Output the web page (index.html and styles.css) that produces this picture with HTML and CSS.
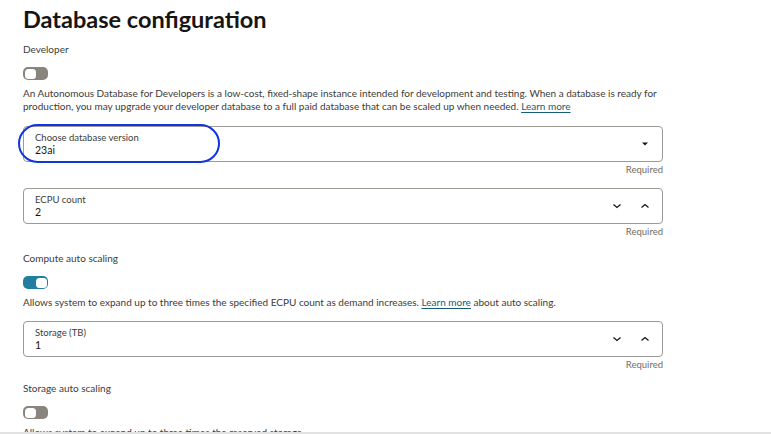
FILE: index.html
```html
<!DOCTYPE html>
<html>
<head>
<meta charset="utf-8">
<link rel="stylesheet" href="styles.css">
</head>
<body>
<div class="page">
  <h1 class="title">Database configuration</h1>

  <div class="label">Developer</div>
  <div class="toggle off"><span class="knob"></span></div>
  <p class="help">An Autonomous Database for Developers is a low-cost, fixed-shape instance intended for development and testing. When a database is ready for production, you may upgrade your developer database to a full paid database that can be scaled up when needed. <a class="link">Learn more</a></p>

  <div class="field-wrap first">
    <div class="field">
      <div class="field-text">
        <div class="field-label">Choose database version</div>
        <div class="field-value">23ai</div>
      </div>
      <div class="field-icons">
        <svg width="10" height="10" viewBox="0 0 10 10"><path d="M2 3.5h6L5 6.5z" fill="#161513"/></svg>
      </div>
    </div>
    <div class="oval"></div>
    <div class="req">Required</div>
  </div>

  <div class="field-wrap">
    <div class="field">
      <div class="field-text">
        <div class="field-label">ECPU count</div>
        <div class="field-value">2</div>
      </div>
      <div class="field-icons">
        <svg width="10" height="10" viewBox="0 0 10 10"><path d="M1.5 3.5L5 6.5L8.5 3.5" fill="none" stroke="#161513" stroke-width="1.3"/></svg>
        <svg width="10" height="10" viewBox="0 0 10 10"><path d="M1.5 6.5L5 3.5L8.5 6.5" fill="none" stroke="#161513" stroke-width="1.3"/></svg>
      </div>
    </div>
    <div class="req">Required</div>
  </div>

  <div class="label sec">Compute auto scaling</div>
  <div class="toggle on"><span class="knob"></span></div>
  <p class="help">Allows system to expand up to three times the specified ECPU count as demand increases. <a class="link">Learn more</a> about auto scaling.</p>

  <div class="field-wrap">
    <div class="field">
      <div class="field-text">
        <div class="field-label">Storage (TB)</div>
        <div class="field-value">1</div>
      </div>
      <div class="field-icons">
        <svg width="10" height="10" viewBox="0 0 10 10"><path d="M1.5 3.5L5 6.5L8.5 3.5" fill="none" stroke="#161513" stroke-width="1.3"/></svg>
        <svg width="10" height="10" viewBox="0 0 10 10"><path d="M1.5 6.5L5 3.5L8.5 6.5" fill="none" stroke="#161513" stroke-width="1.3"/></svg>
      </div>
    </div>
    <div class="req">Required</div>
  </div>

  <div class="label sec last">Storage auto scaling</div>
  <div class="toggle off"><span class="knob"></span></div>
  <p class="help">Allows system to expand up to three times the reserved storage.</p>
</div>
<div class="bottom-line"></div>
</body>
</html>
```

FILE: styles.css
```css
html, body {
  margin: 0;
  padding: 0;
  background: #ffffff;
  overflow: hidden;
  height: 434px;
}
body {
  font-family: Lato, "Open Sans", sans-serif;
  color: #161513;
  position: relative;
}
.page {
  padding: 5px 108px 0 23px;
}
.title {
  margin: 0;
  font-size: 23.5px;
  font-weight: 700;
  line-height: 29px;
  color: #161513;
}
.label {
  margin-top: 8px;
  font-size: 10px;
  line-height: 14px;
  color: #3c3b39;
}
.label.sec {
  margin-top: 13px;
}
.label.sec.last {
  margin-top: 10px;
}
.toggle {
  margin-top: 11px;
  width: 25px;
  height: 13px;
  border-radius: 5px;
  box-sizing: border-box;
  display: flex;
  align-items: center;
  padding: 1.5px;
}
.toggle.off {
  background: #8a847e;
}
.toggle.on {
  background: #227e9e;
  justify-content: flex-end;
}
.knob {
  width: 11px;
  height: 10px;
  background: #ffffff;
  border-radius: 3.5px;
}
.help {
  margin: 7px 0 0 0;
  font-size: 10px;
  line-height: 13px;
  color: #3c3b39;
}
.link {
  color: #165d73;
  text-decoration: underline;
  text-underline-offset: 2px;
}
.field-wrap {
  position: relative;
  margin-top: 12px;
}
.field-wrap.first {
  margin-top: 13px;
}
.field {
  display: flex;
  align-items: center;
  height: 36px;
  box-sizing: border-box;
  border: 1px solid #9e9a95;
  border-radius: 4px;
  padding: 0 12px 0 11px;
}
.field-text {
  flex: 1;
}
.field-label {
  font-size: 9.5px;
  line-height: 12px;
  color: #3c3b39;
}
.field-value {
  font-size: 10.5px;
  line-height: 13px;
  color: #161513;
}
.field-icons {
  display: flex;
  gap: 18px;
  align-items: center;
}
.field-icons svg {
  display: block;
}
.req {
  text-align: right;
  font-size: 9.5px;
  line-height: 13px;
  margin-top: 1px;
  color: #6f6c69;
}
.oval {
  position: absolute;
  left: -5px;
  top: -2px;
  width: 202px;
  height: 39px;
  box-sizing: border-box;
  border: 2px solid #1034e0;
  border-radius: 20px;
}
.bottom-line {
  position: absolute;
  left: 0;
  right: 0;
  top: 432px;
  height: 2px;
  background: #e2e2e2;
}
```
